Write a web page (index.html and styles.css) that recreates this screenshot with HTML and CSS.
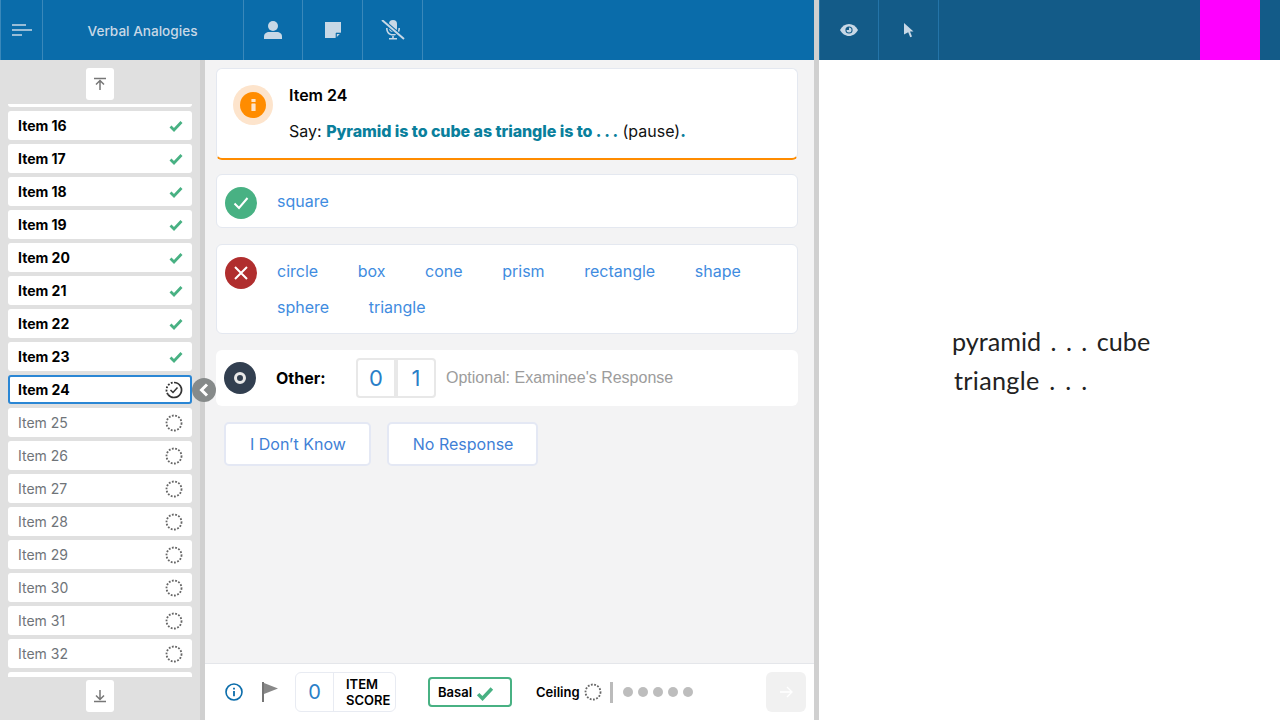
FILE: index.html

```html
<!DOCTYPE html>
<html lang="en">
    <head>
        <meta charset="UTF-8" />
        <title>Verbal Analogies</title>

        <link rel="stylesheet" href="styles.css">
    </head>
    <body>
        <svg class="defs" width="0" height="0">
            <symbol id="tick" viewBox="0 0 14 12"><path d="M1.500 6.500 5 10 12.500 2" fill="none" stroke="#48b183" stroke-width="2.800"/></symbol>
            <symbol id="dots" viewBox="0 0 18 18"><circle cx="9" cy="9" r="7.500" fill="none" stroke="#666" stroke-width="1.800" stroke-dasharray="1.800 1.500"/></symbol>
        </svg>

        <div class="left">
            <header class="bar">
                <div class="cell menu">
                    <svg width="20" height="14" viewBox="0 0 20 14"><path d="M0 2h14M0 7h20M0 12h10" stroke="#c8d8e6" stroke-width="1.700"/></svg>
                </div>
                <div class="cell title">Verbal Analogies</div>
                <div class="cell icon first">
                    <svg width="18" height="18" viewBox="0 0 18 18" fill="#c8d8e6"><circle cx="9" cy="5" r="5"/><path d="M0 18v-2.500c0-3 2.500-4.500 5-4.500h8c2.500 0 5 1.500 5 4.500V18z"/></svg>
                </div>
                <div class="cell icon">
                    <svg width="16" height="16" viewBox="0 0 16 16" fill="#c8d8e6"><path d="M0 0h16v10.500L10.500 16H0z"/><path d="M11 16v-5h5z" fill="#0a6caa" stroke="#0a6caa" stroke-width=".6"/><path d="M11.800 15v-3h3z"/></svg>
                </div>
                <div class="cell icon">
                    <svg width="24" height="20" viewBox="0 0 24 20" fill="#c8d8e6"><rect x="8" y="0" width="8" height="12" rx="4"/><path d="M5 8c0 5 3 7.500 7 7.500s7-2.500 7-7.500h-1.600c0 4-2.400 6-5.400 6S6.600 12 6.600 8zM11.200 15h1.600v3H16v1.500H8V18h3.200z"/><path d="M1 0 23 19" stroke="#0a6caa" stroke-width="4"/><path d="M1 0 23 19" stroke="#c8d8e6" stroke-width="2"/></svg>
                </div>
            </header>

            <div class="content">
                <aside class="side">
                    <div class="jump">
                        <svg width="14" height="14" viewBox="0 0 14 14"><path d="M1 1.500h12M7 13V3.500M3 7.500l4-4 4 4" fill="none" stroke="#777" stroke-width="1.500"/></svg>
                    </div>
                    <div class="list">
                        <div class="piece top"></div>
                        <div class="item done">Item 16 <svg class="tick"><use href="#tick"/></svg></div>
                        <div class="item done">Item 17 <svg class="tick"><use href="#tick"/></svg></div>
                        <div class="item done">Item 18 <svg class="tick"><use href="#tick"/></svg></div>
                        <div class="item done">Item 19 <svg class="tick"><use href="#tick"/></svg></div>
                        <div class="item done">Item 20 <svg class="tick"><use href="#tick"/></svg></div>
                        <div class="item done">Item 21 <svg class="tick"><use href="#tick"/></svg></div>
                        <div class="item done">Item 22 <svg class="tick"><use href="#tick"/></svg></div>
                        <div class="item done">Item 23 <svg class="tick"><use href="#tick"/></svg></div>
                        <div class="item done current">Item 24
                            <svg class="dots" viewBox="0 0 18 18"><path d="M9 1.500A7.500 7.500 0 1 1 3 13.500" fill="none" stroke="#333" stroke-width="1.700"/><path d="M3 13.500A7.500 7.500 0 0 1 9 1.500" fill="none" stroke="#333" stroke-width="1.800" stroke-dasharray="1.800 1.500"/><path d="M5.500 9 8 11.500l4.500-5" fill="none" stroke="#333" stroke-width="1.500"/></svg>
                        </div>
                        <div class="item">Item 25 <svg class="dots"><use href="#dots"/></svg></div>
                        <div class="item">Item 26 <svg class="dots"><use href="#dots"/></svg></div>
                        <div class="item">Item 27 <svg class="dots"><use href="#dots"/></svg></div>
                        <div class="item">Item 28 <svg class="dots"><use href="#dots"/></svg></div>
                        <div class="item">Item 29 <svg class="dots"><use href="#dots"/></svg></div>
                        <div class="item">Item 30 <svg class="dots"><use href="#dots"/></svg></div>
                        <div class="item">Item 31 <svg class="dots"><use href="#dots"/></svg></div>
                        <div class="item">Item 32 <svg class="dots"><use href="#dots"/></svg></div>
                        <div class="piece"></div>
                    </div>
                    <div class="jump down">
                        <svg width="14" height="14" viewBox="0 0 14 14"><path d="M1 12.500h12M7 1v9.500M3 6.500l4 4 4-4" fill="none" stroke="#777" stroke-width="1.500"/></svg>
                    </div>
                </aside>

                <div class="split">
                    <div class="collapse">
                        <svg width="10" height="14" viewBox="0 0 10 14"><path d="M8 1.500 2.500 7 8 12.500" fill="none" stroke="#fff" stroke-width="3"/></svg>
                    </div>
                </div>

                <main class="main">
                    <div class="scroll">
                        <section class="card prompt">
                            <div class="halo">
                                <div class="dot">
                                    <svg width="5" height="12" viewBox="0 0 5 12" fill="#fde4cc"><rect x=".4" width="4.200" height="3" rx=".6"/><rect x=".4" y="4.500" width="4.200" height="7.500" rx=".6"/></svg>
                                </div>
                            </div>
                            <div>
                                <h2>Item 24</h2>
                                <p>Say: <strong>Pyramid is to cube as triangle is to . . .</strong> (pause)<strong>.</strong></p>
                            </div>
                        </section>

                        <section class="card answers right-row">
                            <div class="badge green">
                                <svg width="16" height="14" viewBox="0 0 16 14"><path d="M1.500 7.500 6 12l8.500-10" fill="none" stroke="#fff" stroke-width="2"/></svg>
                            </div>
                            <div class="words"><a>square</a></div>
                        </section>

                        <section class="card answers wrong-row">
                            <div class="badge red">
                                <svg width="14" height="14" viewBox="0 0 14 14"><path d="M1 1l12 12M13 1 1 13" stroke="#fff" stroke-width="2"/></svg>
                            </div>
                            <div class="words">
                                <a>circle</a><a>box</a><a>cone</a><a>prism</a><a>rectangle</a><a>shape</a><a>sphere</a><a>triangle</a>
                            </div>
                        </section>

                        <section class="other">
                            <div class="badge navy"><span class="ring"></span></div>
                            <strong class="other-label">Other:</strong>
                            <div class="score">
                                <span>0</span><span>1</span>
                            </div>
                            <span class="hint">Optional: Examinee's Response</span>
                        </section>

                        <div class="btns">
                            <button class="btn know">I Don’t Know</button>
                            <button class="btn none">No Response</button>
                        </div>
                    </div>

                    <footer class="foot">
                        <svg class="f-info" width="18" height="18" viewBox="0 0 18 18"><circle cx="9" cy="9" r="8" fill="none" stroke="#0a6caa" stroke-width="1.600"/><path d="M9 4.800v1.800M9 8v5.200" stroke="#0a6caa" stroke-width="1.800"/></svg>
                        <svg class="f-flag" width="16" height="20" viewBox="0 0 16 20"><path d="M1 0v20" stroke="#666" stroke-width="1.800"/><path d="M2 1l14 5.500L2 12z" fill="#888"/></svg>
                        <div class="item-score">
                            <span class="num">0</span>
                            <span class="lbl">ITEM<br>SCORE</span>
                        </div>
                        <div class="basal">Basal <svg class="b-tick"><use href="#tick"/></svg></div>
                        <div class="ceiling">Ceiling <svg class="dots"><use href="#dots"/></svg></div>
                        <div class="sep"></div>
                        <div class="pips"><i></i><i></i><i></i><i></i><i></i></div>
                        <div class="next">
                            <svg width="14" height="12" viewBox="0 0 14 12"><path d="M1 6h12M8 1l5 5-5 5" fill="none" stroke="#fff" stroke-width="1.300"/></svg>
                        </div>
                    </footer>
                </main>
            </div>
        </div>

        <div class="gutter"></div>

        <div class="right">
            <header class="bar dark">
                <div class="cell icon tool">
                    <svg width="18" height="12" viewBox="0 0 18 12"><path d="M0 6c2-3.700 5.300-6 9-6s7 2.300 9 6c-2 3.700-5.300 6-9 6S2 9.700 0 6z" fill="#c8d8e6"/><circle cx="9" cy="6" r="3.600" fill="#135b88"/><path d="M9 3.500a2.500 2.500 0 1 1-2.500 2.500H9z" fill="#c8d8e6"/></svg>
                </div>
                <div class="cell icon">
                    <svg width="10" height="15" viewBox="0 0 10 15"><path d="M0 0l9.500 8.500H6l2 5-1.800.8-2-5L0 11.500z" fill="#c8d8e6"/></svg>
                </div>
                <div class="magenta"></div>
            </header>
            <div class="stage">
                <p class="line">pyramid . . . cube</p>
                <p class="line">triangle . . .</p>
            </div>
        </div>
    </body>
</html>
```

FILE: styles.css

```css
* {
    box-sizing: border-box;
}

html, body {
    height: 100%;
    margin: 0;
}

body {
    display: flex;
    overflow: hidden;
    font-family: Inter, sans-serif;
    font-size: 16px;
    color: #111;
}

.defs {
    position: absolute;
}

.left {
    width: 814px;
    display: flex;
    flex-direction: column;
}

.gutter {
    width: 5px;
    background-color: #d0d0d0;
}

.right {
    flex: 1;
    display: flex;
    flex-direction: column;
}

.bar {
    height: 60px;
    display: flex;
    flex-shrink: 0;
    background-color: #0a6caa;
    color: #c8d8e6;
}

.bar.dark {
    background-color: #135b88;
}

.cell {
    display: flex;
    align-items: center;
    justify-content: center;
    border-right: 1px solid #3a88ba;
}

.bar.dark .cell {
    border-right-color: #2474a8;
}

.menu {
    width: 43px;
    border-left: 1px solid #3a88ba;
}

.title {
    width: 201px;
    padding-top: 2px;
    padding-right: 1px;
    font-size: 13.600px;
    font-weight: 500;
}

.icon {
    width: 60px;
}

.icon.first {
    width: 59px;
}

.tool {
    border-left: 1px solid #2474a8;
}

.magenta {
    width: 60px;
    margin-left: auto;
    margin-right: 20px;
    background-color: #f0f;
}

.content {
    flex: 1;
    display: flex;
    min-height: 0;
}

/* item list */
.side {
    width: 200px;
    background-color: #e0e0e0;
    display: flex;
    flex-direction: column;
    align-items: center;
    padding-top: 8px;
}

.jump {
    width: 28px;
    height: 32px;
    flex-shrink: 0;
    background-color: #fff;
    border-radius: 3px;
    display: flex;
    align-items: center;
    justify-content: center;
}

.jump.down {
    margin-bottom: 8px;
}

.list {
    width: 100%;
    flex: 1;
    min-height: 0;
    overflow: hidden;
    padding: 4px 8px 0;
}

.piece {
    height: 3px;
    background-color: #fff;
    border-radius: 0 0 3px 3px;
    margin-bottom: 4px;
}

.item {
    height: 29px;
    margin-bottom: 4px;
    padding: 0 9px 0 10px;
    background-color: #fff;
    border-radius: 3px;
    display: flex;
    align-items: center;
    justify-content: space-between;
    font-size: 14px;
    color: #6f7479;
}

.item.done {
    color: #000;
    font-weight: 700;
}

.item.current {
    border: 2px solid #2a86d4;
    padding: 0 7px 0 8px;
}

.list .piece:last-child {
    height: 5px;
    border-radius: 3px 3px 0 0;
    margin: 0;
}

.tick {
    width: 14px;
    height: 12px;
}

.dots {
    width: 18px;
    height: 18px;
}

/* splitter */
.split {
    width: 5px;
    background-color: #d0d0d0;
    position: relative;
}

.collapse {
    position: absolute;
    left: -8px;
    top: 318px;
    width: 24px;
    height: 24px;
    border-radius: 50%;
    background-color: #868a8a;
    display: flex;
    align-items: center;
    justify-content: center;
}

/* question */
.main {
    flex: 1;
    display: flex;
    flex-direction: column;
    background-color: #f3f3f4;
}

.scroll {
    flex: 1;
    padding: 8px 16px 0 11px;
}

.card {
    background-color: #fff;
    border: 1px solid #e4e8f0;
    border-radius: 6px;
    margin-bottom: 16px;
}

.prompt {
    height: 92px;
    margin-bottom: 14px;
    padding: 16px 16px 0 16px;
    display: flex;
    border-bottom: 2px solid #ff8c00;
}

.halo {
    width: 40px;
    height: 40px;
    border-radius: 50%;
    background-color: #fde4cc;
    display: flex;
    align-items: center;
    justify-content: center;
    margin-right: 16px;
}

.dot {
    width: 26px;
    height: 26px;
    border-radius: 50%;
    background-color: #ff8c00;
    display: flex;
    align-items: center;
    justify-content: center;
}

.prompt h2 {
    margin: 0;
    font-size: 16px;
    font-weight: 600;
    line-height: 20px;
    color: #000;
}

.prompt p {
    margin: 16px 0 0;
    font-size: 16px;
    line-height: 20px;
    color: #111;
}

.prompt strong {
    font-weight: 800;
    letter-spacing: -0.070px;
    color: #0a7f9c;
}

.answers {
    display: flex;
    padding: 12px 8px 0;
    align-items: flex-start;
}

.right-row {
    height: 54px;
}

.wrong-row {
    height: 90px;
}

.badge {
    width: 32px;
    height: 32px;
    flex-shrink: 0;
    border-radius: 50%;
    display: flex;
    align-items: center;
    justify-content: center;
}

.green {
    background-color: #48b183;
}

.red {
    background-color: #b02e2e;
}

.navy {
    background-color: #323f50;
}

.ring {
    width: 12px;
    height: 12px;
    border: 3px solid #e8e8e8;
    border-radius: 50%;
}

.words {
    margin-left: 20px;
    padding-right: 20px;
    display: flex;
    flex-wrap: wrap;
    column-gap: 39.600px;
    row-gap: 16px;
    line-height: 20px;
    padding-top: 4px;
}

.words a {
    color: #3f8ce0;
    font-size: 16px;
}

.other {
    height: 56px;
    margin-bottom: 16px;
    background-color: #fff;
    border-radius: 6px;
    display: flex;
    align-items: center;
    padding-left: 8px;
}

.other-label {
    width: 80px;
    margin-left: 20px;
    font-size: 16px;
    font-weight: 700;
    color: #000;
}

.score {
    display: flex;
    border: 2px solid #e8e8e8;
    border-radius: 4px;
    height: 40px;
    width: 80px;
}

.score span {
    flex: 1;
    display: flex;
    align-items: center;
    justify-content: center;
    font-size: 22px;
    color: #2a7fc8;
}

.score span + span {
    border-left: 4px solid #e8e8e8;
}

.hint {
    margin-left: 10px;
    font-size: 16px;
    color: #9c9c9c;
    font-family: "Liberation Sans", sans-serif;
}

.btns {
    display: flex;
    gap: 16px;
    padding-left: 8px;
}

.btn {
    height: 44px;
    padding: 0 23px 0 24px;
    background-color: #fff;
    border: 2px solid #e4e8f4;
    border-radius: 5px;
    font-family: inherit;
    font-size: 16px;
    color: #3f7fd6;
}

/* footer */
.foot {
    height: 57px;
    flex-shrink: 0;
    background-color: #fff;
    border-top: 1px solid #e4e6ea;
    display: flex;
    align-items: center;
    padding: 0 8px 0 20px;
}

.f-flag {
    margin-left: 19px;
}

.item-score {
    margin-left: 17px;
    height: 40px;
    width: 101px;
    border: 1px solid #e8ebf2;
    border-radius: 6px;
    display: flex;
    align-items: center;
}

.num {
    width: 38px;
    height: 100%;
    border-right: 1px solid #e8ebf2;
    display: flex;
    align-items: center;
    justify-content: center;
    font-size: 20px;
    color: #2a7fc8;
}

.lbl {
    padding-left: 12px;
    font-size: 13px;
    line-height: 16px;
    font-weight: 600;
    color: #000;
}

.basal {
    margin-left: 32px;
    width: 84px;
    height: 30px;
    padding-left: 8px;
    border: 2px solid #48b183;
    border-radius: 4px;
    display: flex;
    align-items: center;
    gap: 4px;
    font-size: 13px;
    font-weight: 600;
    color: #000;
}

.b-tick {
    width: 18px;
    height: 15px;
    margin-top: 2px;
}

.ceiling {
    margin-left: 24px;
    display: flex;
    align-items: center;
    gap: 4px;
    font-size: 13px;
    font-weight: 600;
    color: #000;
}

.sep {
    width: 3px;
    height: 21px;
    margin-left: 8px;
    background-color: #bbb;
}

.pips {
    display: flex;
    gap: 5px;
    margin-left: 10px;
}

.pips i {
    width: 10px;
    height: 10px;
    border-radius: 50%;
    background-color: #bdbdbd;
}

.next {
    width: 40px;
    height: 40px;
    margin-left: auto;
    border-radius: 6px;
    background-color: #f1f1f1;
    display: flex;
    align-items: center;
    justify-content: center;
}

/* stimulus */
.stage {
    flex: 1;
    background-color: #fff;
    padding-top: 266px;
    padding-left: 133px;
}

.line {
    margin: 0 0 9px;
    font-family: "Lato", sans-serif;
    font-size: 25.200px;
    line-height: 30px;
    word-spacing: 3px;
    color: #222;
    white-space: pre;
}

.line + .line {
    padding-left: 2px;
    letter-spacing: .3px;
}
```
